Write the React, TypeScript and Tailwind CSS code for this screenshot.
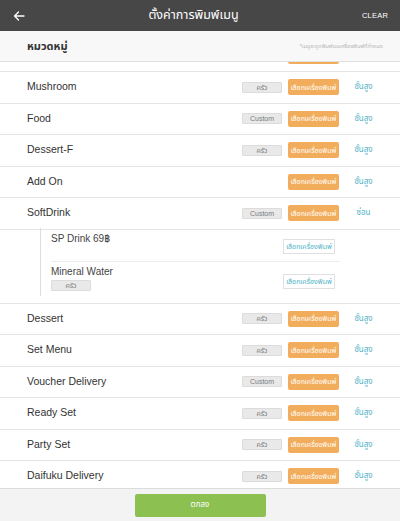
import React from "react";

const FONT = { fontFamily: '"Helvetica Neue", "Liberation Sans", "Noto Sans Thai", "Noto Sans", Tahoma, sans-serif' };

type Row = { name: string; badge?: "ครัว" | "Custom"; link?: string };

const rowsTop: Row[] = [
  { name: "Mushroom", badge: "ครัว" },
  { name: "Food", badge: "Custom" },
  { name: "Dessert-F", badge: "ครัว" },
  { name: "Add On" },
];

const rowsBottom: Row[] = [
  { name: "Dessert", badge: "ครัว" },
  { name: "Set Menu", badge: "ครัว" },
  { name: "Voucher Delivery", badge: "Custom" },
  { name: "Ready Set", badge: "ครัว" },
  { name: "Party Set", badge: "ครัว" },
  { name: "Daifuku Delivery", badge: "ครัว" },
];

function Badge({ label, className = "" }: { label: string; className?: string }) {
  return (
    <div
      className={
        "flex h-[11px] w-[40px] items-center justify-center rounded-[1px] border border-[#dcdcdc] bg-[#e9e9ea] text-[7px] leading-none text-[#7b7b7b] " +
        className
      }
    >
      {label}
    </div>
  );
}

function OrangeBtn({ label = "เลือกเครื่องพิมพ์" }: { label?: string }) {
  return (
    <div className="flex h-[16px] w-[51px] items-center justify-center rounded-[2px] bg-[#f2ad5c] text-[7px] leading-none text-white">
      {label}
    </div>
  );
}

function MainRow({ row, link = "ชั้นสูง" }: { row: Row; link?: string }) {
  return (
    <div className="flex h-[31.5px] shrink-0 items-center border-b border-[#e4e4e4] pl-[27px] pr-[12px]">
      <div className="flex-1 text-[10.5px] text-[#333]">{row.name}</div>
      {row.badge ? <Badge label={row.badge} /> : null}
      <div className="ml-[6px]">
        <OrangeBtn />
      </div>
      <div className="w-[49px] text-center text-[8px] text-[#4fb3c6]">{link}</div>
    </div>
  );
}

function PartialRow() {
  return (
    <div className="flex h-[31.5px] shrink-0 items-center border-b border-[#e4e4e4] pl-[27px] pr-[12px]">
      <div className="flex-1" />
      <div className="ml-[6px]">
        <OrangeBtn label="" />
      </div>
      <div className="w-[49px]" />
    </div>
  );
}

function OutlineBtn() {
  return (
    <div className="flex h-[15px] w-[52px] items-center justify-center border border-[#e0e0e0] bg-white text-[7px] leading-none text-[#4fb3c6]">
      เลือกเครื่องพิมพ์
    </div>
  );
}

export default function App() {
  return (
    <div className="flex h-[521px] w-[400px] flex-col overflow-hidden bg-white" style={FONT}>
      {/* Header */}
      <div className="flex h-[31px] shrink-0 items-center bg-[#474747] px-[12px]">
        <svg width="12" height="10" viewBox="0 0 12 10" className="ml-[1px]">
          <path d="M11 5H1.5M5.5 1L1.5 5l4 4" stroke="#fff" strokeWidth="1.3" fill="none" strokeLinecap="round" strokeLinejoin="round" />
        </svg>
        <div className="flex-1 text-center text-[12.5px] text-white">ตั้งค่าการพิมพ์เมนู</div>
        <div className="text-[7.5px] tracking-[0.2px] text-white">CLEAR</div>
      </div>
      {/* Sub header */}
      <div className="flex h-[31px] shrink-0 items-center border-b border-[#e0e0e0] bg-[#f8f8f8] pl-[27px] pr-[17px]">
        <div className="flex-1 text-[11px] font-bold text-[#333]">หมวดหมู่</div>
        <div className="text-[5.5px] text-[#b5b5b5]">*เมนูจะถูกพิมพ์บนเครื่องพิมพ์ที่กำหนด</div>
      </div>
      {/* List */}
      <div className="relative flex-1 overflow-hidden">
        <div className="-mt-[21.5px] flex flex-col">
          <PartialRow />
          {rowsTop.map((r, i) => (
            <MainRow key={i} row={r} />
          ))}
          {/* SoftDrink block */}
          <div className="flex shrink-0 flex-col border-b border-[#e4e4e4]">
            <MainRow row={{ name: "SoftDrink", badge: "Custom" }} link="ซ่อน" />
            <div className="-mt-[2px] mb-[7px] ml-[40px] w-[300px] border-l border-[#dedede] pl-[10px]">
              <div className="flex h-[34px] items-start justify-between border-b border-[#ececec]">
                <div className="pt-[3px] text-[10px] text-[#444]">SP Drink 69฿</div>
                <div className="mr-[5px] mt-[11px]">
                  <OutlineBtn />
                </div>
              </div>
              <div className="flex h-[34px] items-start justify-between">
                <div className="flex flex-col pt-[4px]">
                  <div className="text-[10px] leading-[12px] text-[#444]">Mineral Water</div>
                  <Badge label="ครัว" className="mt-[2px]" />
                </div>
                <div className="mr-[5px] mt-[12px]">
                  <OutlineBtn />
                </div>
              </div>
            </div>
          </div>
          {rowsBottom.map((r, i) => (
            <MainRow key={i} row={r} />
          ))}
        </div>
      </div>
      {/* Footer */}
      <div className="flex h-[33px] shrink-0 items-center justify-center border-t border-[#dcdcdc] bg-[#f3f3f3]">
        <div className="flex h-[23px] w-[131px] items-center justify-center rounded-[2px] bg-[#8cc152] text-[8px] text-white">
          ตกลง
        </div>
      </div>
    </div>
  );
}
